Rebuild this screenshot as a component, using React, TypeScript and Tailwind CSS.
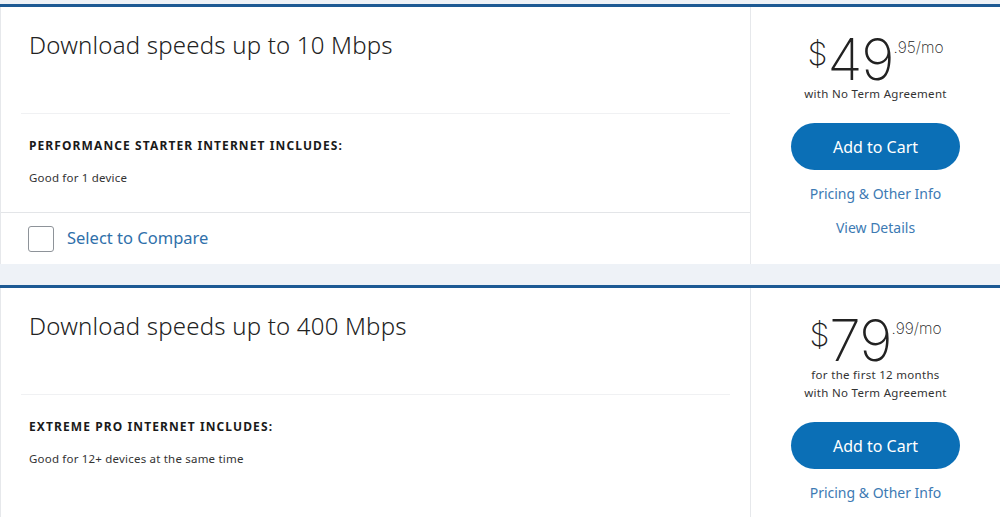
import React from 'react'

interface Plan {
  speed: string
  name: string
  feature: string
  dollars: string
  cents: string
  terms: string[]
  showDetails: boolean
}

const plans: Plan[] = [
  {
    speed: 'Download speeds up to 10 Mbps',
    name: 'PERFORMANCE STARTER INTERNET INCLUDES:',
    feature: 'Good for 1 device',
    dollars: '49',
    cents: '.95/mo',
    terms: ['with No Term Agreement'],
    showDetails: true,
  },
  {
    speed: 'Download speeds up to 400 Mbps',
    name: 'EXTREME PRO INTERNET INCLUDES:',
    feature: 'Good for 12+ devices at the same time',
    dollars: '79',
    cents: '.99/mo',
    terms: ['for the first 12 months', 'with No Term Agreement'],
    showDetails: false,
  },
]

function PlanCard({ plan }: { plan: Plan }) {
  return (
    <div className="flex border-t-[3px] border-[#1d5a94] bg-white">
      {/* Left: speed + features */}
      <div className="w-[751px] shrink-0 border-l border-r border-[#e6e8eb] flex flex-col">
        <div className="h-[106px] pl-[28px] pt-[22px]">
          <h2 className="text-[24px] leading-[32px] text-[#222] font-light tracking-[0.2px]">{plan.speed}</h2>
        </div>
        <div className="mx-[20px] border-t border-[#f0f1f3]" />
        <div className="pl-[28px] pt-[24px] pb-[26px]">
          <p className="text-[12px] leading-[16px] font-bold tracking-[1.1px] text-[#1a1a1a]">{plan.name}</p>
          <p className="mt-[16px] text-[11.5px] leading-[16px] text-[#333] tracking-[0.2px]">{plan.feature}</p>
        </div>
        {plan.showDetails && (
          <div className="border-t border-[#e3e5e8] h-[52px] flex items-center pl-[27px] gap-[13px]">
            <span className="w-[26px] h-[26px] rounded-[3px] border border-[#8e9399] bg-white" />
            <span className="text-[16.5px] text-[#2f70aa]">Select to Compare</span>
          </div>
        )}
        {!plan.showDetails && <div className="flex-1 border-b border-[#e6e8eb]" />}
      </div>

      {/* Right: price + actions */}
      <div className="flex-1 flex flex-col items-center pt-[28px] pb-[16px]">
        <div className="flex items-start text-[#222] font-['Inter',sans-serif]">
          <span className="text-[32px] leading-[32px] font-extralight mt-[3px]">$</span>
          <span className="text-[57px] leading-[50px] font-extralight tracking-[-1px]">{plan.dollars}</span>
          <span className="text-[15.5px] leading-[16px] font-extralight mt-[5px]">{plan.cents}</span>
        </div>
        <div className="flex flex-col items-center">
          {plan.terms.map((t) => (
            <p key={t} className="text-[11.5px] leading-[18px] text-[#333] tracking-[0.3px]">{t}</p>
          ))}
        </div>
        <button className="mt-[20px] w-[169px] h-[47px] rounded-full bg-[#0b6fb6] text-white text-[16px]">
          Add to Cart
        </button>
        <a className="mt-[14px] text-[14px] leading-[20px] text-[#3d7ab3]">Pricing &amp; Other Info</a>
        {plan.showDetails && (
          <a className="mt-[14px] text-[14px] leading-[20px] text-[#3d7ab3]">View Details</a>
        )}
      </div>
    </div>
  )
}

export default function App() {
  return (
    <div className="min-h-screen bg-[#eef2f7] pt-[4px] font-['Noto_Sans',sans-serif] overflow-hidden h-[517px]">
      <PlanCard plan={plans[0]} />
      <div className="h-[21px]" />
      <PlanCard plan={plans[1]} />
    </div>
  )
}
